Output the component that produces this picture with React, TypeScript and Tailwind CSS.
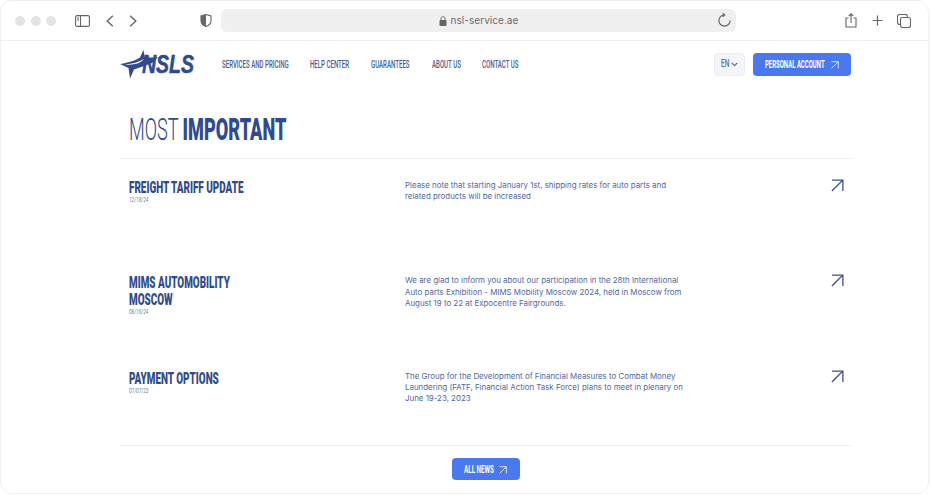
import type { ReactNode } from 'react'

const roboto = "font-['Roboto','Liberation_Sans',sans-serif]"

// no condensed face is installed, so text gets squeezed horizontally
function Squeeze({ box, scale, children }: { box: string; scale: string; children: ReactNode }) {
  return (
    <span className={`inline-block ${box}`}>
      <span className={`inline-block origin-left whitespace-nowrap ${scale}`}>{children}</span>
    </span>
  )
}

function ArrowUpRight({ className }: { className: string }) {
  return (
    <svg viewBox="0 0 14 14" fill="none" stroke="currentColor" strokeWidth="1.4" className={className}>
      <path d="M1 1.2H12.8V13M12.6 1.4L1 13" />
    </svg>
  )
}

function Logo() {
  return (
    <div className="relative flex h-[29px] w-[74px] items-center">
      <svg viewBox="0 0 74 29" className="absolute inset-0 h-[29px] w-[74px]">
        <path fill="#2f4b8c" d="M0 14C9 12.5 16 10.5 20 7.5L23.5 0L25 8L38 7L32 13L24 16L14 19.5L10 28.5L8.5 18L0 14Z" />
        <path fill="#fff" d="M5 14.5C12 14 19 12 24 9C21 13 14 15.5 5 14.5Z" />
      </svg>
      <span className="relative ml-[22px] mt-[1px] font-['Liberation_Sans',sans-serif] text-[25px] font-bold italic leading-none text-[#2f4b8c] [-webkit-text-stroke:0.5px_#2f4b8c]">
        <Squeeze box="w-[52px]" scale="scale-x-[0.78]">NSLS</Squeeze>
      </span>
    </div>
  )
}

function BrowserBar() {
  return (
    <div className="flex h-[40px] items-center border-b border-[#efefef] pl-[14px] pr-[19px]">
      <div className="flex gap-[5.5px]">
        <span className="size-[10px] rounded-full bg-[#e4e4e4]" />
        <span className="size-[10px] rounded-full bg-[#e4e4e4]" />
        <span className="size-[10px] rounded-full bg-[#e4e4e4]" />
      </div>
      <svg viewBox="0 0 15 12" fill="none" stroke="#666" strokeWidth="1.1" className="ml-[19px] h-3 w-[15px] shrink-0">
        <rect x="0.6" y="0.6" width="13.8" height="10.8" rx="1.5" />
        <path d="M5.5 0.6V11.4M2 3H4M2 5H4" />
      </svg>
      <svg viewBox="0 0 8 12" fill="none" stroke="#666" strokeWidth="1.4" className="ml-[16px] h-3 w-2 shrink-0">
        <path d="M6.8 0.8L1.2 6L6.8 11.2" />
      </svg>
      <svg viewBox="0 0 8 12" fill="none" stroke="#666" strokeWidth="1.4" className="ml-[15px] h-3 w-2 shrink-0">
        <path d="M1.2 0.8L6.8 6L1.2 11.2" />
      </svg>
      <svg viewBox="0 0 12 13" className="ml-[63px] h-[13px] w-3 shrink-0">
        <path d="M6 0.5L11 2V6.5C11 9.5 9 11.5 6 12.5C3 11.5 1 9.5 1 6.5V2Z" fill="none" stroke="#666" strokeWidth="1.1" />
        <path d="M6 0.5L1 2V6.5C1 9.5 3 11.5 6 12.5Z" fill="#666" />
      </svg>
      <div className="relative ml-[9px] flex h-[23px] w-[515px] shrink-0 items-center justify-center rounded-md bg-[#f0f0f0]">
        <svg viewBox="0 0 8 10" className="mr-[4px] h-[10px] w-2">
          <path d="M2 4V2.8C2 0 6 0 6 2.8V4" fill="none" stroke="#666" strokeWidth="1" />
          <rect x="0.5" y="4" width="7" height="6" rx="1" fill="#666" />
        </svg>
        <span className="font-['Inter',sans-serif] text-[10px] tracking-[0.05px] text-[#6b6b6b]">nsl-service.ae</span>
        <svg viewBox="0 0 12 13" fill="none" stroke="#666" strokeWidth="1.1" className="absolute right-[5px] top-[4px] h-[14px] w-[13px]">
          <path d="M11.2 7A5.2 5.2 0 1 1 6 1.8M4.3 0.3L6.2 1.8L4.3 3.5" />
        </svg>
      </div>
      <svg viewBox="0 0 12 15" fill="none" stroke="#666" strokeWidth="1.1" className="ml-[109px] h-[15px] w-3 shrink-0">
        <path d="M3.5 5H1V14H11V5H8.5M6 10V0.8M3.8 3L6 0.8L8.2 3" />
      </svg>
      <svg viewBox="0 0 11 11" fill="none" stroke="#666" strokeWidth="1.2" className="ml-[15px] size-[11px] shrink-0">
        <path d="M5.5 0.5V10.5M0.5 5.5H10.5" />
      </svg>
      <svg viewBox="0 0 14 14" fill="none" stroke="#666" strokeWidth="1.1" className="ml-[14px] size-[14px] shrink-0">
        <rect x="3.5" y="3.5" width="10" height="10" rx="2" />
        <path d="M10.5 3.5V2.5A2 2 0 0 0 8.5 0.5H2.5A2 2 0 0 0 0.5 2.5V8.5A2 2 0 0 0 2.5 10.5H3.5" />
      </svg>
    </div>
  )
}

const navLinks = [
  { label: 'Services and pricing', box: 'w-[66px]' },
  { label: 'Help center', box: 'w-[40px]' },
  { label: 'Guarantees', box: 'w-[39px]' },
  { label: 'About us', box: 'w-[29px]' },
  { label: 'Contact us', box: 'w-[36px]' },
]

const news = [
  {
    title: ['Freight tariff update'],
    date: '12/18/24',
    text: ['Please note that starting January 1st, shipping rates for auto parts and', 'related products will be increased'],
  },
  {
    title: ['MIMS Automobility', 'Moscow'],
    date: '08/16/24',
    text: [
      'We are glad to inform you about our participation in the 28th International',
      'Auto parts Exhibition - MIMS Mobility Moscow 2024, held in Moscow from',
      'August 19 to 22 at Expocentre Fairgrounds.',
    ],
  },
  {
    title: ['Payment options'],
    date: '07/07/23',
    text: [
      'The Group for the Development of Financial Measures to Combat Money',
      'Laundering (FATF, Financial Action Task Force) plans to meet in plenary on',
      'June 19-23, 2023',
    ],
  },
]

export default function App() {
  return (
    <div className="h-[495px] w-[930px] overflow-hidden bg-white">
      <div className="h-[494px] w-[929px] rounded-xl border border-[#f0f0f0] bg-white">
        <BrowserBar />
        <div className="ml-[119px] w-[731px]">
          <header className="flex h-[46px] items-center">
            <Logo />
            <nav className={`ml-[28px] mt-[1px] flex gap-[21.5px] text-[11.5px] font-medium uppercase text-[#465d96] ${roboto}`}>
              {navLinks.map(link => (
                <a key={link.label}>
                  <Squeeze box={link.box} scale="scale-x-[0.53]">{link.label}</Squeeze>
                </a>
              ))}
            </nav>
            <div className="ml-auto flex items-center gap-2">
              <div className={`flex h-[23px] w-[31px] items-center justify-center gap-[1px] rounded border border-[#e9edf5] bg-[#f3f5f9] pt-[1px] text-[11px] font-medium text-[#5a6f9f] ${roboto}`}>
                <Squeeze box="w-[9px]" scale="scale-x-[0.6]">EN</Squeeze>
                <svg viewBox="0 0 7 5" fill="none" stroke="#5a6f9f" strokeWidth="1.2" className="h-[5px] w-[7px]">
                  <path d="M0.7 0.8L3.5 3.6L6.3 0.8" />
                </svg>
              </div>
              <button className={`flex h-[23px] w-[98px] items-center justify-center gap-[5px] rounded bg-[#4a78ef] pt-[1px] text-[10.5px] font-bold uppercase text-white ${roboto}`}>
                <Squeeze box="w-[61px]" scale="scale-x-[0.57]">Personal account</Squeeze>
                <ArrowUpRight className="size-2" />
              </button>
            </div>
          </header>

          <h1 className={`mt-[23px] h-[48px] pl-[9px] text-[31px] uppercase leading-[40px] text-[#2f4b8c] ${roboto}`}>
            <Squeeze box="w-[157px]" scale="scale-x-[0.585]">
              <span className="font-light">Most </span>
              <span className="font-black">Important</span>
            </Squeeze>
          </h1>

          <div className="border-t border-[#eeeeee]">
            {news.map(item => (
              <article key={item.date} className="flex h-[95.33px] pl-[9px] pr-[7px] pt-[20px]">
                <div className="w-[276px]">
                  <h2 className={`flex flex-col text-[16.5px] font-black uppercase leading-[17px] text-[#2f4b8c] ${roboto}`}>
                    {item.title.map(line => (
                      <Squeeze key={line} box="w-[130px]" scale="scale-x-[0.6]">{line}</Squeeze>
                    ))}
                  </h2>
                  <p className={`mt-[1px] flex h-[7px] items-center text-[7px] leading-[7px] text-[#6b7ea8] ${roboto}`}>
                    <Squeeze box="w-[21px]" scale="scale-x-[0.66]">{item.date}</Squeeze>
                  </p>
                </div>
                <p className="mt-[1px] font-['Inter',sans-serif] text-[7.9px] leading-[11.3px] text-[#50689d]">
                  {item.text.map(line => (
                    <span key={line} className="block whitespace-nowrap">{line}</span>
                  ))}
                </p>
                <ArrowUpRight className="ml-auto size-[13px] text-[#3d5590]" />
              </article>
            ))}
          </div>

          <div className="flex justify-center border-t border-[#eeeeee] pt-3">
            <button className={`flex h-[22.5px] w-[68px] items-center justify-center gap-[5px] rounded bg-[#4a78ef] pt-[1px] text-[10.5px] font-bold uppercase text-white ${roboto}`}>
              <Squeeze box="w-[30px]" scale="scale-x-[0.6]">All news</Squeeze>
              <ArrowUpRight className="size-2" />
            </button>
          </div>
        </div>
      </div>
    </div>
  )
}
